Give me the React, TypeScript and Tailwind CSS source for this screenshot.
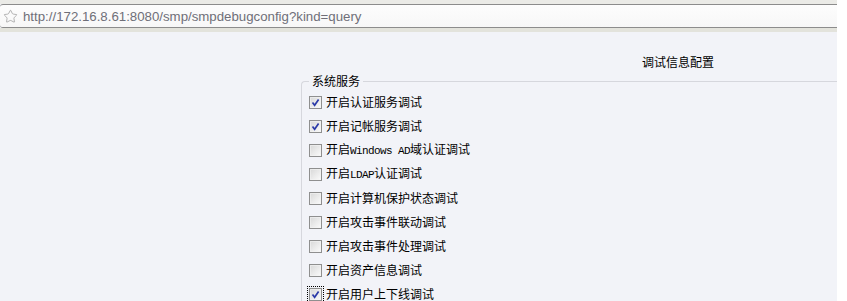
import { Star } from "lucide-react";

type Item = { label: React.ReactNode; checked: boolean; focused?: boolean };

const cjk = "font-['Noto_Sans_CJK_SC',sans-serif]";

const Latin = ({ children }: { children: string }) => (
  <span className="font-['Liberation_Mono',monospace] text-[11px] tracking-[-0.6px]">{children}</span>
);

const items: Item[] = [
  { label: "开启认证服务调试", checked: true },
  { label: "开启记帐服务调试", checked: true },
  { label: <>开启<Latin>Windows AD</Latin>域认证调试</>, checked: false },
  { label: <>开启<Latin>LDAP</Latin>认证调试</>, checked: false },
  { label: "开启计算机保护状态调试", checked: false },
  { label: "开启攻击事件联动调试", checked: false },
  { label: "开启攻击事件处理调试", checked: false },
  { label: "开启资产信息调试", checked: false },
  { label: "开启用户上下线调试", checked: true, focused: true },
];

const Checkbox = ({ checked, focused }: { checked: boolean; focused?: boolean }) => (
  <span
    className={
      "relative w-[13px] h-[13px] shrink-0 border border-[#8f8f8f] bg-gradient-to-br from-[#d8d8d8] to-[#fbfbfb] " +
      (focused ? "outline outline-1 outline-dotted outline-black outline-offset-[1px]" : "")
    }
  >
    <span className="absolute inset-0 border border-[#f4f4f4]/60" />
    {checked && (
      <svg viewBox="0 0 11 11" className="absolute inset-0 w-[11px] h-[11px]">
        <path d="M2.5 5.5 L4.6 8.2 L8.6 2.4" fill="none" stroke="#2b3aa8" strokeWidth="1.7" />
      </svg>
    )}
  </span>
);

export default function App() {
  return (
    <div className="w-[847px] h-[301px] overflow-hidden bg-white flex">
      <div className="w-[837px] flex flex-col bg-[#f2f3f8]">
        {/* browser address bar */}
        <div className="h-[4px] shrink-0 bg-[#ebebe7]" />
        <div className="h-[24px] shrink-0 flex items-center gap-[5px] pl-[3px] bg-gradient-to-b from-[#fdfdfd] to-[#f7f7f7] border-y border-[#8c8c8c] rounded-l-[3px]">
          <Star className="w-[15px] h-[15px] text-[#8a8a8a]" strokeWidth={1} />
          <span className="pt-[2px] font-['Liberation_Sans',Arial,sans-serif] text-[13.25px] text-[#6f6f78] leading-none">
            http://172.16.8.61:8080/smp/smpdebugconfig?kind=query
          </span>
        </div>
        <div className="h-[4px] shrink-0 bg-[#e3e3dc]" />

        {/* page */}
        <div className={cjk + " text-[12px] text-black flex flex-col"}>
          <div className="h-[42px] shrink-0 pt-[22px] pl-[642px] leading-[16px]">调试信息配置</div>
          <fieldset className="ml-[301px] border-l border-t border-[#d6d7dd] rounded-tl-[4px] pl-[7px]">
            <legend className="px-[3px] leading-[14px]">系统服务</legend>
            <div className="flex flex-col pt-[2px]">
              {items.map((it, i) => (
                <label key={i} className="h-[24px] flex items-center gap-[4px] leading-[14px]">
                  <Checkbox checked={it.checked} focused={it.focused} />
                  <span>{it.label}</span>
                </label>
              ))}
            </div>
          </fieldset>
        </div>
      </div>
    </div>
  );
}
